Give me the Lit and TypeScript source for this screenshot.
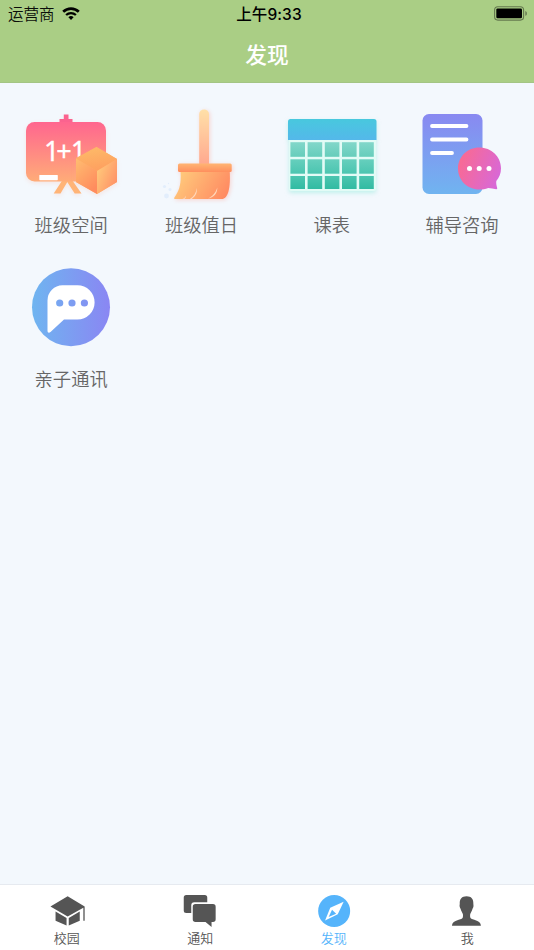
import { LitElement, html, css, svg, TemplateResult } from "lit";
import { customElement, property } from "lit/decorators.js";

// Feature icons share one artboard; each viewBox frames its own column.
const board = html`<svg viewBox="6 100 131 104">
  <defs>
    <linearGradient id="b" x1="0" y1="0" x2="0" y2="1"><stop offset="0" stop-color="#ff668f"/><stop offset="1" stop-color="#ffac78"/></linearGradient>
    <linearGradient id="t" x1="0" y1="0" x2="0.3" y2="1"><stop offset="0" stop-color="#fdbd69"/><stop offset="1" stop-color="#fea160"/></linearGradient>
    <linearGradient id="l" x1="0" y1="0" x2=".6" y2="1"><stop offset="0" stop-color="#ffbd70"/><stop offset="1" stop-color="#ff8c5e"/></linearGradient>
    <linearGradient id="r" x1="0" y1="0.1" x2="1" y2=".8"><stop offset="0" stop-color="#ffce7c"/><stop offset="1" stop-color="#ff8e65"/></linearGradient>
  </defs>
  <g class="glow-warm">
    <path d="M62.500 180h6l-8 13.500h-6.800zM66 180h6l9.500 13.500h-6.800z" fill="#ffb477"/>
    <path d="M63.800 114.500h4.700v4.500h4v4h-13v-4h4.300z" fill="#fb638f"/>
    <rect x="26" y="122" width="80" height="59.500" rx="8.500" fill="url(#b)"/>
    <rect x="39.300" y="175" width="18.500" height="5.200" rx=".6" fill="#fff"/>
  </g>
  <text class="sum" x="44 56.300 70.800" y="160.800">1+1</text>
  <g class="glow-warm">
    <path d="M96.500 147L117 159v23L97 194 76 182v-24z" fill="#ffad69"/>
    <path d="M96.500 147L117 159l-20 12-21-12.500z" fill="url(#t)"/>
    <path d="M76 158.500L97 171v23L76 182z" fill="url(#l)"/>
    <path d="M117 159l-20 12v23l20-12z" fill="url(#r)"/>
  </g>
</svg>`;

const broom = html`<svg viewBox="136 100 131 104">
  <defs>
    <linearGradient id="h" x1="0" y1="0" x2="0" y2="1"><stop offset="0" stop-color="#ffe0a8"/><stop offset="1" stop-color="#ffa98f"/></linearGradient>
    <linearGradient id="k" x1="0" y1="0" x2="0" y2="1"><stop offset="0" stop-color="#ffb573"/><stop offset="1" stop-color="#ff8f5e"/></linearGradient>
    <linearGradient id="s" x1="0" y1=".3" x2="1" y2=".6"><stop offset="0" stop-color="#ffcb7c"/><stop offset="1" stop-color="#ff8b62"/></linearGradient>
  </defs>
  <g class="glow-pink">
    <path d="M199.200 164v-50a4.900 4.600 0 0 1 9.800 0v50z" fill="url(#h)"/>
    <path d="M180.500 171h49.200c.8 14-.7 22-3.500 25.500-1.500 2-3 2.500-5 2.500h-46c-1 0-1.500-.8-.8-1.600 5-6.400 7-13.400 6.100-26.400z" fill="url(#s)"/>
    <rect x="178" y="163.500" width="53.700" height="8.500" rx="1.500" fill="url(#k)"/>
  </g>
  <path d="M196.800 188c-.8 5-3 8.500-7 11h2c4-3 5.500-6 5-11zM217.300 187.500c-1.800 6-5.300 8.700-9.300 11.200 5.500-1.400 9.500-4.700 9.300-11.200zM186 195.500c-.6 1.700-1.300 2.700-3.500 3.500h1.800c1.200-.8 2-2 1.700-3.500z" fill="#ffd8bb"/>
  <g fill="#e2eefc"><circle cx="164.500" cy="186.500" r="1.600"/><circle cx="170" cy="189.500" r="1.500"/><circle cx="166.500" cy="196" r="2.400"/><circle cx="168.500" cy="183.500" r=".7"/></g>
</svg>`;

const cellFill = [
  { y: 142.2, h: 14.6, id: "c0", from: "#82d7ca", to: "#66cdbb" },
  { y: 159.3, h: 14.4, id: "c1", from: "#66cfbd", to: "#4bc5b0" },
  { y: 176, h: 13, id: "c2", from: "#4bc5b0", to: "#31bba2" },
];
const timetable = html`<svg viewBox="266 100 131 104">
  <defs>
    <linearGradient id="hd" x1="0" y1="0" x2="0" y2="1"><stop offset="0" stop-color="#48c8de"/><stop offset="1" stop-color="#54b8ea"/></linearGradient>
    ${cellFill.map((c) => svg`<linearGradient id=${c.id} x1="0" y1="0" x2="0" y2="1"><stop offset="0" stop-color=${c.from}/><stop offset="1" stop-color=${c.to}/></linearGradient>`)}
  </defs>
  <g class="glow-mint">
    <path d="M289 139h87v50a2 2 0 0 1-2 2h-83a2 2 0 0 1-2-2z" fill="#e2fbf6"/>
    <path d="M288 140v-18.500a2.500 2.500 0 0 1 2.500-2.500H374a2.500 2.500 0 0 1 2.500 2.500V140z" fill="url(#hd)"/>
  </g>
  ${cellFill.map((c) => [0, 1, 2, 3, 4].map((i) => svg`<rect x=${290.4 + i * 17.2} y=${c.y} width="14.600" height=${c.h} fill="url(#${c.id})"/>`))}
</svg>`;

const consult = html`<svg viewBox="397 100 131 104">
  <defs>
    <linearGradient id="d" x1="0" y1="0" x2="0" y2="1"><stop offset="0" stop-color="#8989f1"/><stop offset="1" stop-color="#70b4f0"/></linearGradient>
    <linearGradient id="p" x1="0" y1=".3" x2="1" y2=".7"><stop offset="0" stop-color="#fa6a91"/><stop offset="1" stop-color="#d768d9"/></linearGradient>
  </defs>
  <rect x="422.500" y="114" width="60" height="80" rx="6.500" fill="url(#d)"/>
  <path d="M432 126h34.500M432 139.500h34.500M432 153h20" stroke="#fff" stroke-width="3.800" stroke-linecap="round"/>
  <path d="M479.300 147.500c12 0 21.700 9 21.700 20.800 0 5.200-1.700 9.300-4.700 12.700-.3 2.500.2 4.500.9 7.100.2.800-.2 1.200-1 1.100-2.700-.3-5.200-.9-8-1.200-2.800 1-5.700 1.500-8.900 1.500-12 0-21.300-9.300-21.300-21 0-11.800 9.500-21 21.300-21z" fill="url(#p)"/>
  <g fill="#fff"><circle cx="469.500" cy="168.500" r="2.500"/><circle cx="479.200" cy="168.500" r="2.500"/><circle cx="489" cy="168.500" r="2.500"/></g>
</svg>`;

const family = html`<svg viewBox="6 254 131 104">
  <defs><linearGradient id="f" x1="32" y1="0" x2="110" y2="0" gradientUnits="userSpaceOnUse"><stop offset="0" stop-color="#6fb5f0"/><stop offset="1" stop-color="#8a86f3"/></linearGradient></defs>
  <circle cx="71" cy="307.200" r="39" fill="url(#f)"/>
  <path d="M62.500 285.300h15a17.100 17.100 0 0 1 0 34.200H64l-13.500 12.400c-1.500 1.400-3 .8-3-1.200V300.500a15.200 15.200 0 0 1 15-15.200z" fill="#fff"/>
  <g fill="url(#f)"><circle cx="59.700" cy="303" r="3.600"/><circle cx="72" cy="303" r="3.600"/><circle cx="84.400" cy="303" r="3.600"/></g>
</svg>`;

const campus = html`<svg viewBox="48.750 893 36 36"><path d="M50.200 906.500L67.400 896.300l17 10.200v14.300h-1.300v-13L67.400 916.600z"/><path d="M55.300 911.500L66.300 918v7.500l-11-4.700zM79.500 911.500L68.500 918v7.500l11-4.700z"/></svg>`;
const notice = html`<svg viewBox="182.250 893 36 36"><path d="M186.500 895h18.500a2.500 2.500 0 0 1 2.500 2.500v4.700H194.500a3 3 0 0 0-3 3v7.800h-5a2.500 2.500 0 0 1-2.500-2.500v-13a2.500 2.500 0 0 1 2.500-2.500z"/><path d="M195.700 904h17.500a2.700 2.700 0 0 1 2.700 2.700v12.600a2.700 2.700 0 0 1-2.700 2.700h-1.400v5l-6-5h-10.100a2.700 2.700 0 0 1-2.700-2.700v-12.600a2.700 2.700 0 0 1 2.700-2.700z"/></svg>`;
const compass = html`<svg viewBox="315.750 893 36 36"><circle cx="333.900" cy="911" r="16"/><path d="M343.400 901.700l-5.900 12.500-12.700 6.200 5.200-12.600z" fill="#fff"/><path d="M331.800 909.700l4.100 4-7.500 3.300z"/></svg>`;
const person = html`<svg viewBox="449.250 893 36 36"><path d="M466.800 896.200c4.700 0 7 2.700 6.800 7.500 0 1 .3 1.300.1 2.700-.2 1.200-.8 1.700-1 2.700-.5 2.200-1.700 3.500-2.200 5-.3 1.500-.2 3 .3 4 1.300 2.100 10.200 2 10.400 7.600h-29c.2-5.600 9.300-5.500 10.600-7.600.5-1 .6-2.500.3-4-.4-1.500-1.700-2.800-2.200-5-.2-1-.8-1.500-1-2.700-.2-1.400.1-1.700.1-2.700-.2-4.800 2.100-7.500 6.800-7.500z"/></svg>`;

const features = [
  { label: "班级空间", icon: board },
  { label: "班级值日", icon: broom },
  { label: "课表", icon: timetable },
  { label: "辅导咨询", icon: consult },
  { label: "亲子通讯", icon: family },
];
const tabs = [
  { label: "校园", icon: campus },
  { label: "通知", icon: notice },
  { label: "发现", icon: compass },
  { label: "我", icon: person },
];

@customElement("status-bar")
class StatusBar extends LitElement {
  static styles = css`
    :host { display: grid; grid-template-columns: 1fr auto 1fr; grid-template-rows: 27px; align-items: center; height: 27px; padding: 0 7px 0 8px; color: #0b0d09; font-size: 15.500px; line-height: 27px; }
    .carrier { display: flex; align-items: center; gap: 7px; font-weight: 350; }
    .time { align-self: start; margin-top: 1px; line-height: 27px; font-family: Inter, "Noto Sans CJK SC", sans-serif; font-weight: 500; font-size: 15.500px; color: #000; letter-spacing: .1px; padding-left: 3px; }
    .battery { justify-self: end; }
    svg { display: block; }
  `;
  render() {
    return html`
      <div class="carrier"><span>运营商</span>
        <svg width="18" height="13" viewBox="0 0 18 13"><path d="M1.200 4.800a11.200 11.200 0 0 1 15.600 0" fill="none" stroke="#000" stroke-width="2.700"/><path d="M4.100 8a7.200 7.200 0 0 1 9.800 0" fill="none" stroke="#000" stroke-width="2.300"/><path d="M6.400 10.200a3.900 3.900 0 0 1 5.200 0L9 12.900z"/></svg>
      </div>
      <span class="time">上午9:33</span>
      <svg class="battery" width="34" height="15" viewBox="0 0 34 15"><rect x="1.600" y=".8" width="29" height="13.300" rx="3.300" fill="none" stroke="#65794f" stroke-width="1.100"/><rect x="3.300" y="2.600" width="25.700" height="9.700" rx="1.200"/><path d="M32.300 5v4.800c1.200-.5 1.600-1.400 1.600-2.400s-.4-1.900-1.600-2.400z" fill="#65794f"/></svg>`;
  }
}

@customElement("feature-tile")
class FeatureTile extends LitElement {
  @property() label = "";
  @property({ attribute: false }) icon?: TemplateResult;
  static styles = css`
    :host { display: flex; flex-direction: column; align-items: center; height: 153.500px; }
    svg { display: block; width: 131px; height: 104px; }
    .label { margin-top: 5px; font-size: 18.300px; font-weight: 350; line-height: 30px; color: #666; white-space: nowrap; }
    .sum { font: 400 27px "Noto Sans", sans-serif; fill: #fff; stroke: #fff; stroke-width: .3px; }
    .glow-warm { filter: drop-shadow(0 2px 2px #ffae9038); }
    .glow-pink { filter: drop-shadow(1.500px 1px 2px #ff9c8c66); }
    .glow-mint { filter: drop-shadow(0 2px 2px #8feadb80); }
  `;
  render() {
    return html`${this.icon}<span class="label">${this.label}</span>`;
  }
}

@customElement("tab-item")
class TabItem extends LitElement {
  @property() label = "";
  @property({ attribute: false }) icon?: TemplateResult;
  @property({ type: Boolean, reflect: true }) active = false;
  static styles = css`
    :host { display: flex; flex-direction: column; align-items: center; padding-top: 8px; color: #555; }
    :host([active]) { color: #55b4fb; }
    svg { display: block; width: 36px; height: 36px; fill: currentColor; }
    .label { font-size: 13px; font-weight: 350; line-height: 17px; }
  `;
  render() {
    return html`${this.icon}<span class="label">${this.label}</span>`;
  }
}

@customElement("app-root")
class AppRoot extends LitElement {
  static styles = css`
    :host { display: flex; flex-direction: column; height: 950px; overflow: hidden; background: #f3f8fd; font-family: "Noto Sans CJK SC", sans-serif; }
    header { height: 83px; box-sizing: border-box; background: #aace85; border-bottom: 1px solid #a3c584; }
    h1 { margin: 0; text-align: center; color: #fff; font-size: 21.700px; font-weight: 500; line-height: 54px; }
    main { flex: 1; padding: 17px 6px 0; display: grid; grid-template-columns: repeat(4, 130.300px); align-content: start; }
    nav { display: grid; grid-template-columns: repeat(4, 1fr); height: 65px; background: #fff; border-top: 1px solid #e6eaf0; box-sizing: content-box; }
  `;
  render() {
    return html`
      <header><status-bar></status-bar><h1>发现</h1></header>
      <main>${features.map((f) => html`<feature-tile .label=${f.label} .icon=${f.icon}></feature-tile>`)}</main>
      <nav>${tabs.map((t) => html`<tab-item .label=${t.label} .icon=${t.icon} ?active=${t.label === "发现"}></tab-item>`)}</nav>`;
  }
}
